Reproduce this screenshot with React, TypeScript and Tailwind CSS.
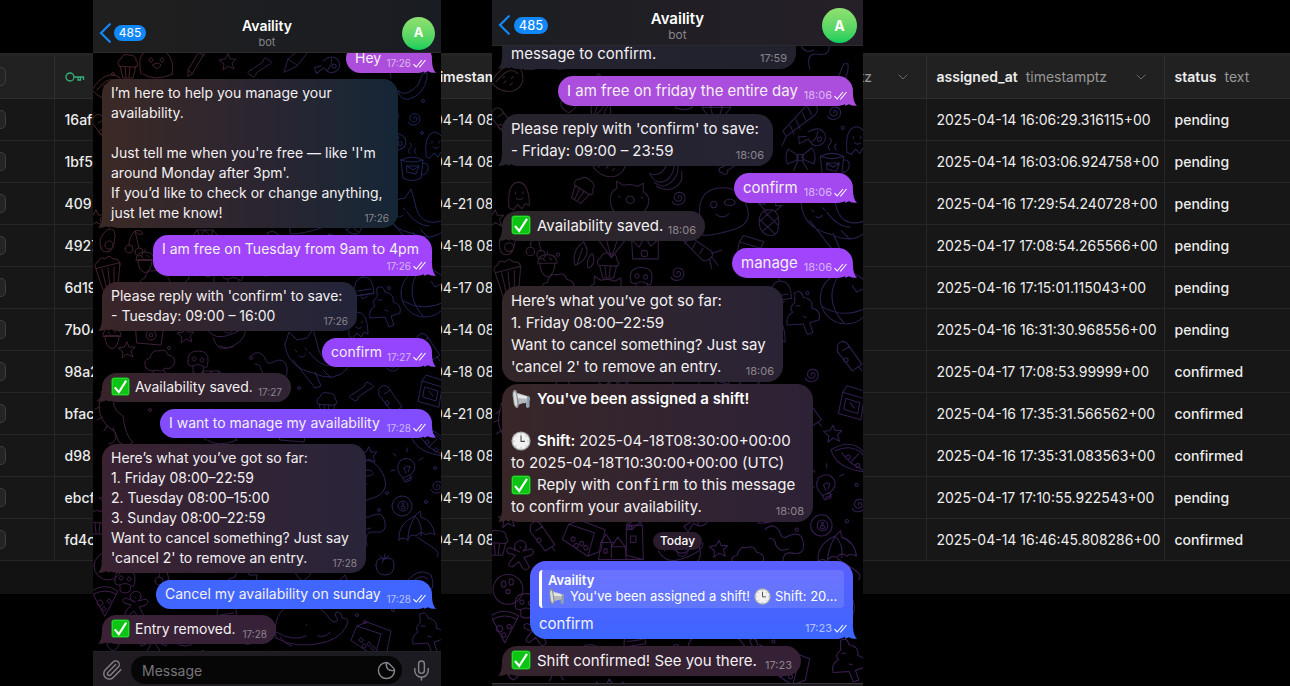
import React from 'react';
import clsx from 'clsx';
import { ChevronDown, Mic, Paperclip } from 'lucide-react';

type PanelSize = 'sm' | 'lg';

const ROWS = [
  { id: '16af', start: '04-14 08', assigned: '2025-04-14 16:06:29.316115+00', status: 'pending' },
  { id: '1bf5', start: '04-14 08', assigned: '2025-04-14 16:03:06.924758+00', status: 'pending' },
  { id: '409', start: '04-21 08', assigned: '2025-04-16 17:29:54.240728+00', status: 'pending' },
  { id: '4927', start: '04-18 08', assigned: '2025-04-17 17:08:54.265566+00', status: 'pending' },
  { id: '6d19', start: '04-17 08', assigned: '2025-04-16 17:15:01.115043+00', status: 'pending' },
  { id: '7b04', start: '04-14 08', assigned: '2025-04-16 16:31:30.968556+00', status: 'pending' },
  { id: '98a2', start: '04-18 08', assigned: '2025-04-17 17:08:53.99999+00', status: 'confirmed' },
  { id: 'bfac', start: '04-21 08', assigned: '2025-04-16 17:35:31.566562+00', status: 'confirmed' },
  { id: 'd98', start: '04-18 08', assigned: '2025-04-16 17:35:31.083563+00', status: 'confirmed' },
  { id: 'ebcf', start: '04-19 08', assigned: '2025-04-17 17:10:55.922543+00', status: 'pending' },
  { id: 'fd4c', start: '04-14 08', assigned: '2025-04-14 16:46:45.808286+00', status: 'confirmed' },
];

/* Wallpaper */

const SHAPES = {
  star: 'M0-8l2 5 6 0-4 4 2 6-6-3-5 4 1-6-5-4 6-1z',
  bone: 'M-9 2l12-8c-1-4 4-5 5-2 4 0 4 5 0 5l-12 8c1 4-4 5-5 2-4 0-4-5 0-5z',
  pencil: 'M-9 14l0-6 12-20q3-3 5 0t-1 4l-12 20zM1-10l6 4M-9 8l5 4',
  swirl: 'M0 0c-2-3 3-3 3 0 0 4-7 4-7-1 0-6 10-6 10 1 0 7-10 8-12 3',
  ball: 'M-14 0a14 14 0 1 1 28 0a14 14 0 1 1-28 0M-6-5a2 3 0 1 0 4 0a2 3 0 1 0-4 0M1-7a2 3 0 1 0 4 0a2 3 0 1 0-4 0M-2 2a2 2 0 1 0 4 0a2 2 0 1 0-4 0',
  eight: 'M-10 0a10 10 0 1 1 20 0a10 10 0 1 1-20 0M-4 0a5 5 0 1 1 10 0a5 5 0 1 1-10 0M1-3a1 1 0 1 0 .1 0M1 0a2 1.500 0 1 0 .1 0',
  mug: 'M-12-8l2 18q9 5 18 0l2-18q-11 4-22 0zm0 0q11-6 22 0M10-5q6 0 5 6t-7 6M-6-2l12 0-3 8-9-2zM-6-2l6 4 6-4M-3-14q-3-3 0-6t0-5M3-14q-3-3 0-6',
  ghost: 'M-9 10q-2-22 8-24 11 0 11 22l-4-2-3 5-4-4-4 5zM-3-5l0 2M4-5l0 2M-2 1q3 3 6 0',
  banana: 'M-14 6q8 7 20-6l5-12 4 0 0 5q-3 17-18 21-8 2-11-8z',
  spade: 'M-12 10l4-13 14-12 6 5-11 14zM-8-3l9 6M6-15l5-2 2 5',
  fish: 'M-9-2q5-10 14-6 6 6 1 12-5 5-12 0l-5 8-4-5 6-4M3-3a2 2 0 1 0 .1 0M-2-7q3 6 0 12',
  bow: 'M-2-2l-9-6q-4 6-1 14l10-4zM2-2l9-7q5 6 2 15l-11-5zM-3-3l6 0 0 6-6 0zM-2 3l-4 9M2 3l5 8',
  bear: 'M-18 12q-4-18 4-22-4-9 2-9 3 0 5 5 5-2 9 0 3-6 7-4 3 4-1 9 8 9 5 21M-8-4a2 2 0 1 0 .1 0M3-4a2 2 0 1 0 .1 0M-6 3q4-4 8 0-4 7-8 0zM-16 12q12 8 30 0',
  candy: 'M-14 14l-3-5 22-24q6-4 9 0t-1 9zM-10 4l3 8M-5-2l4 9M1-8l4 8M6-14l4 8M-14 14l-4 9',
  melon: 'M-15 2q14-22 28-12 6 14-6 20-12 4-22-8zM-10 2q12-16 20-8M-3 3l2-2M3 5l2-2M4-1l2-2M-4-2l2-1',
  pizza: 'M-12-11q12-9 26 0l-13 25zM-10-8q11-6 22 0M-4-2a3 3 0 1 0 .1 0M5-3a2 2 0 1 0 .1 0M0 5a2 2 0 1 0 .1 0',
  fan: 'M-16-9q20-12 32 4 5 8 3 17-30-2-35-21zM-12-8q18-8 28 6l1 13M-6-6l8 9 15 9M2 3l8-8M0-4a2 2 0 1 0 .1 0M9 4a2 2 0 1 0 .1 0',
  bulb: 'M-4 8q-9-9-3-17 8-6 14 2 3 7-4 12l1 5-6 2zM-4 8l7-3M-1 10l6-3M-3-2l2 5M3-3l-2 5M-3-2l3-2 3 1M0-18l0-4M-11-14l-3-3M12-10l4-2M-12 0l-4 1',
  umbrella: 'M-14 4q-2-16 16-24l5-5 1 6q12 4 14 18-6-4-9 0-5-5-10 1-5-3-9 4-4-4-8 0zM4 1l18 12q5 4 2 8M2-20q-8 14-7 25M2-20q8 8 6 20',
  tomato: 'M-9 0q0-8 8-6 10-3 10 6 0 10-9 10t-9-10zM-1-6l-4-3M-1-6l1-5M-1-6l5-3M-1-6l-2 4',
  whale: 'M-34 10q-4-26 16-34 20-6 34 10 8 12 12 6-6-8 0-8 4 1 4 6 6 0 6 4-4 14-22 20-30 8-50-4zM-34 4q16 10 30 4M-4-4l1 1M-30 9q6 8 12 9M8 8q8 2 12-4',
  gift: 'M-18 2l6-14 24 8-6 22zM-12-12l10-4 24 9-4 20-12 5M-8 0a2 2 0 1 0 .1 0M0 4a2 2 0 1 0 .1 0M-5 6a2 2 0 1 0 .1 0M4 8a2 2 0 1 0 .1 0',
  tree: 'M-6-20q6-4 8 4 10 2 8 10 9 2 7 11l-9 3 3 9-5 2-4-10-15 1q-2-8 5-12-4-4 2-9zM-5-8l4 0M2 2l3 1',
  globe: 'M-24 0a24 24 0 1 1 48 0a24 24 0 1 1-48 0M-22 8q20 12 44 0M-6-23q-16 24 4 46M6-12l4 6 8-4 4 6',
  bell: 'M-9 8q-1-18 9-19t11 16zM-9 8l20-3M0-11l-1-3M-2 9q2 4 6-1M-6 3l14-2',
  dino: 'M-14-28q-6 6-8 22 0 16 16 26 4 10-6 12M-14-28q12-4 18 4-2 6-10 4-6 16 8 24 2 20 10 26-6 6-14 0l-6-14M-16-22l-4 2M-20-14l-4 3M-21-5l-5 2M-19 5l-5 3M-14 14l-3 5',
  cat: 'M-28-12l4-12 8 8 10-2 6-9 4 14q4 24 26 18 8-2 4 8-12 14-34 4-26-6-28-29zM-18-6l2 2M-8-8l2 2M-14 0q3 3 6-1M-20 4l22 28 6-2-6-14M-4-4q10 14 22 14M10 14l8 8',
  tube: 'M-12-8q4-6 9-2l14 20-9 6-14-18zM-7-3q4-2 6-4M8 12l3 4M-4 4a2 2 0 1 0 .1 0',
  milk: 'M-12 8l4-20 20 6-3 20zM-8-12l4-6 19 6-3 6M-5-6l13 4-2 10-13-4zM-1-2l4 5',
  cupcake: 'M-9 0q-3-5 2-7 2-6 8-4 8 0 7 6 4 4 0 6zM-8 0l3 12 10 0 3-12M-3 1l1 10M2 1l-1 10',
  popcorn: 'M-12-6l8 24 14-8 2-22zM-12-6q-3-5 2-7 2-6 7-3 4-5 8 0 7-1 7 6M-6-6l5 21M0-7l2 20M6-8l0 18',
  avocado: 'M-8 8q-4-10 6-18 8-4 8 6-1 16-8 16-5 0-6-4zM-4 6a4 4 0 1 0 8-2a4 4 0 1 0-8 2',
  cherry: 'M-8 6a4 4 0 1 0 8 0a4 4 0 1 0-8 0M2 9a4 4 0 1 0 8 0a4 4 0 1 0-8 0M-4 2q0-8 6-14 2 8 4 17M2-12q6-2 8 3-5 2-8-3',
  acorn: 'M-7-2q0 10 7 13 7-3 7-13zM-9-2q0-8 9-8t9 8zM0-10l0-3M-4-6l2 2M2-7l2 2',
  camera: 'M-14-6l6-2 2-6 10 0 2 4 8 0-3 20-24-2zM-4 0a5 5 0 1 0 10 0a5 5 0 1 0-10 0M-1 0a2 2 0 1 0 4 0a2 2 0 1 0-4 0',
  planet: 'M-16-6q2-14 16-14t17 12-12 20-20-8M-22-6q8 14 26 6 16-6 16-14M-8-8q8 8 16 0M-4-8a5 5 0 1 0 9 0M-8 12q8 4 14 0',
  cloud: 'M-14 4q-4-8 4-10 2-9 9-7 7-3 9 4 9 2 6 9-3 6-9 4-3 5-8 2-6 3-11-2zM-6 6l-2 8M4 6l4 8M-8 14q8 4 16 0',
  mushroom: 'M-10 0q-1-10 10-10t10 10-4 5l-1 6q-5 4-10 0l0-6q-6 1-5-5zM-4-4a2 2 0 1 0 .1 0M4-3a2 2 0 1 0 .1 0M-5 5q5-3 10 0',
  carrot: 'M-18-14l6-2 26 18q3 4-2 7t-7 1zM-8-10l-3 5M-1-6l-3 5M6-1l-3 5M14 4l9-3M14 7l6 8M12 9l2 9',
  pineapple: 'M-9 6q-2-14 8-15t10 12-8 12-10-9zM-4-9l-6-6 6 1 1-8 4 6 6-5-1 8 6 0-6 5M-9 0l14 13M-4-7l12 12M9-2l-15 13M3-9l-12 11',
  crown: 'M-11 9l-1-18 7 7 5-10 6 9 7-6 0 18zM-3 4a3 3 0 1 0 6 0a3 3 0 1 0-6 0',
  castle: 'M-22 18l2-16 5-8 5 8 0 14M-20 2l12 0M-10 6l6-9 7 9 1 12M-10 6l14 0M4 14l0-28 7-14 8 14 1 32zM4-14l15 0M8-4l5 0 0 6-5 0zM-17 8l3 0 0 4-3 0zM-22 18l42 0M7-20l9 0',
  ginger: 'M-3-4q-7-2-4-8 4-5 9-1 3 5-2 8l8-2q4 3 0 6l-7 2 5 9q-3 5-6 1l-4-6-6 5q-5-1-2-5l5-6-7-2q-3-4 2-5zM-3-9l1 1M2-9l1 1',
  pig: 'M-18 2q-1-10 6-13l0-7 6 4q8-2 13 1l6-3 0 8q6 4 5 10-2 12-18 13t-18-13zM-3-2q4-4 7 0 2 4-3 5-5-1-4-5zM-10-4l1 1M11-3l1 1M-12 14l0 4M8 13l2 4',
  bananas: 'M-14 4q10 4 16-8l1-12 5 0q4 18-6 26-10 6-16-6zM-10 12q12 10 22-8l1-12M-8 16q16 8 24-6l0-8M3-16l1-4 4 0 0 4',
  gem: 'M-13-6l5-7 16 0 6 7-14 18zM-13-6l27 0M-5-6l5 18 6-18M-8-13l3 7 5-7 6 7 2-7',
  heart: 'M0 6q-11-7-6-12 4-2 6 2 3-5 7-1 3 5-7 11z',
  worm: 'M-20-16q8-8 14 2 2 8 8 4 12-6 14 6t-10 10-8 14M-16-8q6 0 6 6 4 8 12 4',
  head: 'M-20 16q-6-30 14-34t28 14-10 24-30 6zM-8-6a3 3 0 1 0 .1 0M7-8a5 3 0 1 0 .1 0M-6 6q6 5 12 0',
  leaf: 'M-6 12q-4-14 8-22 8 12-4 20zM-4 10l5-14M6 14q-2-8 4-13 4 8-2 13z',
  dot: 'M-1.500 0a1.500 1.500 0 1 0 3 0a1.500 1.500 0 1 0-3 0',
};

const DOODLES: [keyof typeof SHAPES, number, number, number?][] = [
  ['melon', 14, 88], ['cupcake', 35, 66], ['bear', 66, 62], ['pencil', 104, 62], ['star', 135, 62], ['bone', 167, 68],
  ['spade', 203, 62], ['fish', 238, 66, 20], ['banana', 319, 85], ['swirl', 321, 119], ['mug', 320, 168], ['ghost', 342, 146],
  ['worm', 300, 58], ['cat', 318, 216], ['star', 3, 218], ['ghost', 25, 198], ['cupcake', 85, 191, 30], ['pig', 129, 201],
  ['bananas', 162, 172], ['swirl', 175, 199], ['head', 216, 208], ['pineapple', 260, 219], ['candy', 290, 127], ['fish', 304, 143, 30],
  ['bow', 289, 161], ['heart', 72, 113], ['tube', 12, 126], ['leaf', 100, 110], ['melon', 110, 168], ['bone', 225, 168],
  ['pencil', 40, 160, 60], ['gem', 210, 120], ['cloud', 180, 100], ['avocado', 16, 240], ['cherry', 40, 243], ['leaf', 84, 250],
  ['gem', 112, 243], ['crown', 143, 247], ['carrot', 192, 247], ['popcorn', 15, 275], ['acorn', 52, 262], ['cupcake', 109, 262],
  ['cloud', 62, 284], ['mushroom', 140, 274], ['pig', 108, 290], ['swirl', 174, 270], ['bell', 270, 288], ['milk', 240, 252],
  ['globe', 332, 293], ['tree', 290, 308], ['ghost', 265, 326], ['acorn', 19, 338], ['camera', 57, 335], ['star', 93, 335],
  ['planet', 135, 334], ['star', 34, 350], ['cloud', 67, 364], ['mushroom', 105, 361], ['gem', 118, 384], ['cat', 220, 356],
  ['swirl', 300, 365], ['tube', 336, 345], ['dino', 28, 412], ['worm', 178, 372], ['bone', 269, 392], ['tube', 298, 397],
  ['milk', 337, 393], ['cupcake', 234, 404], ['bear', 130, 428], ['camera', 200, 432], ['star', 320, 420], ['fan', 334, 444],
  ['bulb', 314, 470], ['head', 268, 478], ['star', 276, 455], ['swirl', 344, 487], ['eight', 309, 506], ['worm', 276, 526],
  ['tomato', 292, 565], ['umbrella', 320, 536], ['gift', 84, 517], ['tube', 48, 514], ['castle', 122, 520], ['star', 15, 500],
  ['star', 213, 528], ['planet', 178, 536], ['ginger', 29, 535], ['ball', 15, 566], ['cupcake', 5, 522], ['pizza', 11, 602],
  ['ginger', 45, 606], ['mushroom', 32, 580], ['pencil', 140, 500, 20], ['fish', 195, 500], ['cloud', 240, 540], ['heart', 210, 575],
  ['camera', 150, 585], ['cherry', 70, 575], ['leaf', 250, 585], ['melon', 325, 585], ['whale', 217, 628], ['gift', 276, 638],
  ['ball', 92, 632], ['bell', 133, 612], ['banana', 160, 630], ['tree', 333, 634], ['acorn', 20, 640], ['bow', 60, 640],
  ['crown', 110, 662], ['swirl', 180, 662], ['star', 235, 668], ['bone', 310, 670], ['ghost', 30, 682], ['cat', 150, 684],
  ['dot', 20, 74], ['dot', 100, 84], ['dot', 330, 101], ['dot', 329, 133], ['dot', 303, 196], ['dot', 62, 252], ['dot', 80, 300],
  ['dot', 158, 358], ['dot', 76, 348], ['dot', 206, 388], ['dot', 296, 288], ['dot', 57, 410], ['dot', 342, 468], ['dot', 286, 510],
  ['dot', 333, 502], ['dot', 294, 493], ['dot', 300, 610], ['dot', 264, 615], ['dot', 272, 622], ['dot', 190, 412], ['dot', 130, 508],
];

const Wallpaper = ({ id, size }: { id: string; size: PanelSize }) => (
  <svg className="absolute inset-0 w-full h-full" aria-hidden="true">
    <defs>
      <linearGradient id={`${id}-x`} x1="0" y1="0" x2="1" y2="0.300">
        <stop offset="0" stopColor={size === 'sm' ? '#4e241e' : '#35222b'} />
        <stop offset="0.500" stopColor="#301d40" />
        <stop offset="1" stopColor={size === 'sm' ? '#18265c' : '#291e4e'} />
      </linearGradient>
      <linearGradient id={`${id}-y`} x1="0" y1="0" x2="0" y2="1">
        <stop offset="0.300" stopColor="#3c1c50" stopOpacity="0" />
        <stop offset="1" stopColor="#3c1c50" stopOpacity="0.900" />
      </linearGradient>
      <mask id={`${id}-mask`} maskUnits="userSpaceOnUse" x="0" y="0" width="100%" height="100%">
        <g
          transform={size === 'sm' ? undefined : 'translate(0 -14) scale(1.066)'}
          fill="none"
          stroke="#fff"
          strokeWidth="1"
          strokeLinejoin="round"
          strokeLinecap="round"
        >
          {DOODLES.map(([shape, x, y, turn = 0], i) => (
            <path key={i} d={SHAPES[shape]} transform={`translate(${x} ${y}) rotate(${turn})`} />
          ))}
        </g>
      </mask>
    </defs>
    <g mask={`url(#${id}-mask)`}>
      <rect width="100%" height="100%" fill={`url(#${id}-x)`} />
      <rect width="100%" height="100%" fill={`url(#${id}-y)`} />
    </g>
  </svg>
);

/* Emoji */

const CheckEmoji = ({ className }: { className: string }) => (
  <svg viewBox="0 0 20 20" className={clsx('inline-block shrink-0 align-[-4px]', className)}>
    <rect x="0.500" y="0.500" width="19" height="19" rx="3" fill="#0cc413" />
    <rect x="1.500" y="1.500" width="17" height="17" rx="2" fill="none" stroke="#38dd3c" strokeWidth="0.800" />
    <path d="M4 11l4.200 5L16 3.800" fill="none" stroke="#fff" strokeWidth="2.200" />
  </svg>
);

const MegaphoneEmoji = ({ className }: { className: string }) => (
  <svg viewBox="0 0 20 20" className={clsx('inline-block shrink-0 align-[-4px]', className)}>
    <path d="M12 12l5-1 1.500 1v6l-2 1-1.500-1v-4l-2 .5z" fill="#8ea3ad" />
    <path d="M5 3.500L18 7.500q1.800 2 .5 4.500L5 16.500z" fill="#b4b8ba" />
    <path d="M6 5l12 3q.8 1 .6 2L6 9z" fill="#e4e6e6" />
    <path d="M16 7l2 .6q1.600 2 .4 4.400l-2 .6z" fill="#7f9aa6" />
    <path d="M3 1q2-1 2.800 1.500l2 12.500Q8 18.500 6 19.300 3.500 19 2.500 14L1.500 6Q1.400 2 3 1z" fill="#8b8f91" />
    <path d="M3.500 2.500q1.200 0 1.800 4l1 8q0 3-1 3-1.400-.5-2-4.500l-.8-6Q2.200 3 3.500 2.500z" fill="#dadcdc" />
  </svg>
);

const ClockEmoji = ({ className }: { className: string }) => (
  <svg viewBox="0 0 20 20" className={clsx('inline-block shrink-0 align-[-4px]', className)}>
    <circle cx="10" cy="10" r="9.600" fill="#a9aaac" />
    <circle cx="10" cy="10" r="8.300" fill="#f1f1f2" />
    <path
      d="M10 2.500v1.200M10 16.300v1.200M2.500 10h1.200M16.300 10h1.200M4.700 4.700l.8.800M14.500 14.500l.8.800M15.300 4.700l-.8.800M5.500 14.500l-.8.800"
      stroke="#999"
      strokeWidth="0.800"
    />
    <path d="M10 4.500V10.400H14" fill="none" stroke="#4b4b4d" strokeWidth="1.100" />
  </svg>
);

/* Chat */

const ReadMark = () => (
  <svg viewBox="0 0 13 9" className="w-[13px] h-[9px]" fill="none" stroke="currentColor" strokeWidth="1.100">
    <path d="M.5 5.200L3.200 8 9 1M6.300 7.600L6.700 8 12.500 1" />
  </svg>
);

const Tail = ({ side, color }: { side: 'in' | 'out'; color: string }) => (
  <svg
    viewBox="0 0 12 13"
    className={clsx('absolute bottom-0 w-3 h-[13px]', side === 'out' ? '-right-1' : '-left-1 -scale-x-100')}
    fill={color}
  >
    <path d="M-4 13L0 0H8q0 9 4 12.700Q7 13.200 4 11.300 1 13-4 13z" />
  </svg>
);

interface BubbleProps {
  size: PanelSize;
  side: 'in' | 'out';
  time: string;
  width: string;
  tone: string;
  tail?: string;
  stacked?: boolean;
  flatTop?: boolean;
  children: React.ReactNode;
}

const Bubble = ({ size, side, time, width, tone, tail, stacked, flatTop, children }: BubbleProps) => (
  <div
    className={clsx(
      'relative px-[9px] whitespace-pre',
      width,
      tone,
      side === 'out' ? 'self-end' : 'self-start',
      size === 'sm' ? 'mx-[9px] pt-1 pb-[5px] rounded-[15px]' : 'mx-[10px] py-1 rounded-[16px]',
      flatTop && 'rounded-t-none',
    )}
  >
    {tail && <Tail side={side} color={tail} />}
    <div className={clsx('relative', stacked && 'pb-3')}>{children}</div>
    <div
      className={clsx(
        'absolute bottom-[3px] flex items-center gap-[2px]',
        side === 'out' ? 'right-[6px] text-white' : 'right-[9px] text-[#8d858c]',
        size === 'sm' ? 'text-[10px] leading-[14px]' : 'text-[11px] leading-[15px]',
      )}
    >
      <span className={side === 'out' ? 'text-white/60' : undefined}>{time}</span>
      {side === 'out' && <ReadMark />}
    </div>
  </div>
);

const ChatHeader = ({ size }: { size: PanelSize }) => {
  const sm = size === 'sm';
  return (
    <header
      className={clsx(
        'relative z-10 grid grid-cols-[1fr_auto_1fr] items-center px-[6px] border-b border-[#2b2a2d]',
        sm
          ? 'h-[53px] pt-[14px] bg-linear-to-r from-[#201f1f] to-[#191c22]'
          : 'h-[46px] pt-[5px] bg-linear-to-r from-[#1c1e21] to-[#251f28]',
      )}
    >
      <button aria-label="Back, 485 unread" className={clsx('flex items-center justify-self-start', sm ? 'gap-[3px]' : 'gap-1')}>
        <svg viewBox="0 0 12 20" className="w-3 h-5" fill="none" stroke="#1288f8" strokeWidth="2.200">
          <path d="M10.800 1.200L2 10l8.800 8.800" strokeLinecap="round" />
        </svg>
        <span
          className={clsx(
            'rounded-full bg-[#1288f8] text-white text-center',
            sm ? 'w-8 text-[12px] leading-4' : 'w-[34px] text-[13px] leading-[17px]',
          )}
        >
          485
        </span>
      </button>
      <div className="text-center pt-[2px]">
        <h1 className={clsx('font-semibold text-white', sm ? 'text-[14px] leading-4' : 'text-[15px] leading-[17px]')}>
          Availity
        </h1>
        <p className={clsx('text-[#85858a]', sm ? 'text-[11px] leading-4' : 'text-[12px] leading-4')}>bot</p>
      </div>
      <div
        className={clsx(
          'justify-self-end flex items-center justify-center rounded-full font-bold text-white bg-linear-to-b from-[#8fe070] to-[#00cf5c]',
          sm ? 'size-[33px] text-[13px]' : 'size-[35px] text-[14px]',
        )}
      >
        A
      </div>
    </header>
  );
};

const LeftChat = () => (
  <section className="relative w-[348px] shrink-0 ml-[93px] flex flex-col bg-black overflow-hidden">
    <Wallpaper id="wl" size="sm" />
    <ChatHeader size="sm" />
    <div className="relative flex-1 -mt-[9px] pb-[7px] flex flex-col justify-between text-[14px] leading-5 text-[#f3f0f2]">
      <Bubble size="sm" side="out" time="17:26" width="w-[86px]" tone="bg-[#ad4ddb]" tail="#ad4ddb">Hey</Bubble>
      <Bubble size="sm" side="in" time="17:26" width="w-[296px]" tone="bg-linear-to-r from-[#3b2925] via-[#2c2530] to-[#142636]" tail="#3b2925">
        {"I’m here to help you manage your\navailability.\n\nJust tell me when you're free — like 'I'm\naround Monday after 3pm'.\nIf you’d like to check or change anything,\njust let me know!"}
      </Bubble>
      <Bubble size="sm" side="out" time="17:26" width="w-[279px]" tone="bg-[#a045fb]" tail="#a045fb" stacked>
        I am free on Tuesday from 9am to 4pm
      </Bubble>
      <Bubble size="sm" side="in" time="17:26" width="w-[255px]" tone="bg-linear-to-r from-[#3a2528] to-[#22243a]" tail="#3a2528">
        {"Please reply with 'confirm' to save:\n- Tuesday: 09:00 – 16:00"}
      </Bubble>
      <Bubble size="sm" side="out" time="17:27" width="w-[110px]" tone="bg-[#9645ff]" tail="#9645ff">confirm</Bubble>
      <Bubble size="sm" side="in" time="17:27" width="w-[189px]" tone="bg-linear-to-r from-[#38232b] to-[#2f2434]" tail="#38232b">
        <CheckEmoji className="size-[19px] mr-[5px]" />Availability saved.
      </Bubble>
      <Bubble size="sm" side="out" time="17:28" width="w-[272px]" tone="bg-[#814dff]" tail="#814dff">
        I want to manage my availability
      </Bubble>
      <Bubble size="sm" side="in" time="17:28" width="w-[264px]" tone="bg-linear-to-r from-[#3a2231] to-[#292439]" tail="#3a2231">
        {"Here’s what you’ve got so far:\n1. Friday 08:00–22:59\n2. Tuesday 08:00–15:00\n3. Sunday 08:00–22:59\nWant to cancel something? Just say\n'cancel 2' to remove an entry."}
      </Bubble>
      <Bubble size="sm" side="out" time="17:28" width="w-[276px]" tone="bg-[#4166ff]" tail="#4166ff">
        Cancel my availability on sunday
      </Bubble>
      <Bubble size="sm" side="in" time="17:28" width="w-[174px]" tone="bg-linear-to-r from-[#3a2136] to-[#362138]" tail="#3a2136">
        <CheckEmoji className="size-[19px] mr-[5px]" />Entry removed.
      </Bubble>
    </div>
    <footer className="relative flex items-center gap-2 h-[35px] px-2 pt-[2px] border-t border-[#242126] bg-linear-to-r from-[#201b20] to-[#1b1b21] text-[#85838a]">
      <button aria-label="Attach a file">
        <Paperclip size={22} strokeWidth={1.500} />
      </button>
      <div className="flex-1 min-w-0 flex items-center h-7 rounded-full bg-[#060606] pl-[11px] pr-[6px]">
        <input
          type="text"
          aria-label="Message"
          placeholder="Message"
          className="flex-1 min-w-0 bg-transparent outline-none text-[14px] placeholder:text-[#76757a]"
        />
        <svg viewBox="0 0 20 20" className="size-[19px]" fill="none" stroke="currentColor" strokeWidth="1.500" strokeLinejoin="round">
          <path d="M10 1.500a8.500 8.500 0 1 0 8.500 8.500M10 1.500q-1.500 9.500 8.500 8.500M10 1.500q1.500 0 5 3.400t3.500 5.100" />
        </svg>
      </div>
      <button aria-label="Record a voice message">
        <Mic size={23} strokeWidth={1.500} />
      </button>
    </footer>
  </section>
);

const RightChat = () => (
  <section className="relative w-[371px] shrink-0 ml-[51px] flex flex-col bg-black overflow-hidden">
    <Wallpaper id="wr" size="lg" />
    <ChatHeader size="lg" />
    <div className="relative flex-1 -mt-[7px] pb-[7px] flex flex-col justify-between text-[15px] leading-[22px] text-[#f3f0f2]">
      <Bubble size="lg" side="in" time="17:59" width="w-[294px]" tone="bg-linear-to-r from-[#252330] to-[#21222e]" tail="#252330" flatTop>
        message to confirm.
      </Bubble>
      <Bubble size="lg" side="out" time="18:06" width="w-[295px]" tone="bg-[#ab4ddd]" tail="#ab4ddd">
        I am free on friday the entire day
      </Bubble>
      <Bubble size="lg" side="in" time="18:06" width="w-[271px]" tone="bg-linear-to-r from-[#28242d] to-[#252333]" tail="#28242d">
        {"Please reply with 'confirm' to save:\n- Friday: 09:00 – 23:59"}
      </Bubble>
      <Bubble size="lg" side="out" time="18:06" width="w-[119px]" tone="bg-[#a449ef]" tail="#a449ef">confirm</Bubble>
      <Bubble size="lg" side="in" time="18:06" width="w-[203px]" tone="bg-linear-to-r from-[#2c2528] to-[#2a2430]" tail="#2c2528">
        <CheckEmoji className="size-5 mr-[6px]" />Availability saved.
      </Bubble>
      <Bubble size="lg" side="out" time="18:06" width="w-[121px]" tone="bg-[#a045fb]" tail="#a045fb">manage</Bubble>
      <div className="flex flex-col gap-[2px]">
        <Bubble size="lg" side="in" time="18:06" width="w-[281px]" tone="bg-linear-to-r from-[#322628] to-[#2a2335]">
          {"Here’s what you’ve got so far:\n1. Friday 08:00–22:59\nWant to cancel something? Just say\n'cancel 2' to remove an entry."}
        </Bubble>
        <Bubble size="lg" side="in" time="18:08" width="w-[311px]" tone="bg-linear-to-r from-[#382628] to-[#2d2136]" tail="#382628">
          <p className="flex items-center gap-[6px]">
            <MegaphoneEmoji className="size-5" />
            <b className="font-semibold text-white">You've been assigned a shift!</b>
          </p>
          <p className="flex items-center mt-5">
            <ClockEmoji className="size-5 mr-[6px]" />
            <b className="font-semibold text-white">Shift:</b>
            <span className="ml-1">2025-04-18T08:30:00+00:00</span>
          </p>
          <p>to 2025-04-18T10:30:00+00:00 (UTC)</p>
          <p className="flex items-center">
            <CheckEmoji className="size-5 mr-[6px]" />
            Reply with
            <code className="mx-[5px] font-['DejaVu_Sans_Mono',monospace] text-[15px] leading-[22px]">confirm</code>
            to this message
          </p>
          <p>to confirm your availability.</p>
        </Bubble>
      </div>
      <time className="self-center my-[3px] rounded-full bg-[#2a1c2c] px-[7px] text-[12px] leading-[18px] font-medium text-white">
        Today
      </time>
      <Bubble size="lg" side="out" time="17:23" width="w-[323px]" tone="bg-linear-to-b from-[#5a5eff] to-[#3c66ff]" tail="#3c66ff">
        <blockquote className="mt-[5px] mb-[5px] h-[38px] rounded-[4px] border-l-[3px] border-white bg-white/12 pl-[6px] text-[13px] text-white">
          <p className="font-semibold pt-[2px] leading-4">Availity</p>
          <p className="flex items-center leading-4">
            <MegaphoneEmoji className="size-[17px] mr-[5px]" />
            You've been assigned a shift!
            <ClockEmoji className="size-[17px] mx-1" />
            Shift: 20...
          </p>
        </blockquote>
        confirm
      </Bubble>
      <Bubble size="lg" side="in" time="17:23" width="w-[299px]" tone="bg-linear-to-r from-[#35232c] to-[#352036]" tail="#35232c">
        <CheckEmoji className="size-5 mr-[6px]" />Shift confirmed! See you there.
      </Bubble>
    </div>
    <div className="relative h-[3px] border-t border-[#3a373c] bg-[#1d1b1f]" />
  </section>
);

/* Table */

const ColumnHead = ({ name, type, menu }: { name?: string; type?: string; menu?: boolean }) => (
  <th scope="col" className="border-l border-[#2e2e2e] pl-[10px] pr-[15px] text-left font-normal">
    <div className="flex items-center gap-2 whitespace-nowrap">
      {name && <span className="font-semibold text-[#ededed]">{name}</span>}
      <span className="flex-1 text-[#989898]">{type}</span>
      {menu && (
        <button aria-label={`Options for ${name ?? type}`}>
          <ChevronDown size={16} strokeWidth={1.500} className="text-[#6a6a6a]" />
        </button>
      )}
    </div>
  </th>
);

const RowCheckbox = ({ label }: { label: string }) => (
  <input
    type="checkbox"
    aria-label={label}
    className="block appearance-none size-[19px] -ml-[13px] rounded-[5px] border border-[#3d3d3d] bg-[#242424]"
  />
);

const ShiftTable = () => (
  <div className="min-w-0 self-start mt-[53px] pb-[33px] border-t-3 border-[#242424] bg-[#121212] overflow-hidden">
    <table className="w-full table-fixed border-collapse text-[14px] text-[#ededed] bg-[#171717]">
      <colgroup>
        <col className="w-[54px]" />
        <col className="w-[370px]" />
        <col className="w-[356px]" />
        <col className="w-[146px]" />
        <col className="w-[238px]" />
        <col />
      </colgroup>
      <thead>
        <tr className="h-[42px] bg-[#212121] border-b border-[#2e2e2e]">
          <th className="p-0"><RowCheckbox label="Select all rows" /></th>
          <th scope="col" aria-label="id" className="border-l border-[#2e2e2e] pl-[10px]">
            <svg viewBox="0 0 20 10" className="w-5 h-[10px]" fill="none" stroke="#34b27b" strokeWidth="1.300">
              <path d="M1 5a4 4 0 1 1 8 0a4 4 0 1 1-8 0M9 5h9.500v3M13 5v3h2.500V5" />
            </svg>
          </th>
          <ColumnHead name="timestamp" />
          <ColumnHead type="timestamptz" menu />
          <ColumnHead name="assigned_at" type="timestamptz" menu />
          <ColumnHead name="status" type="text" />
        </tr>
      </thead>
      <tbody>
        {ROWS.map(row => (
          <tr key={row.assigned} className="h-[42px] border-b border-[#262626] whitespace-nowrap">
            <td className="p-0"><RowCheckbox label={`Select ${row.id}`} /></td>
            <td className="border-l border-[#262626] px-[10px] font-medium">{row.id}</td>
            <td className="px-[10px]">{row.start}</td>
            <td />
            <td className="border-l border-[#262626] pl-[10px]">{row.assigned}</td>
            <td className="border-l border-[#262626] pl-[10px] font-medium">{row.status}</td>
          </tr>
        ))}
      </tbody>
    </table>
  </div>
);

export default function App() {
  return (
    <main className="grid grid-cols-1 min-h-screen bg-black overflow-hidden font-['Inter','Liberation_Sans',sans-serif] *:col-start-1 *:row-start-1">
      <ShiftTable />
      <div className="flex z-10">
        <LeftChat />
        <RightChat />
      </div>
    </main>
  );
}
